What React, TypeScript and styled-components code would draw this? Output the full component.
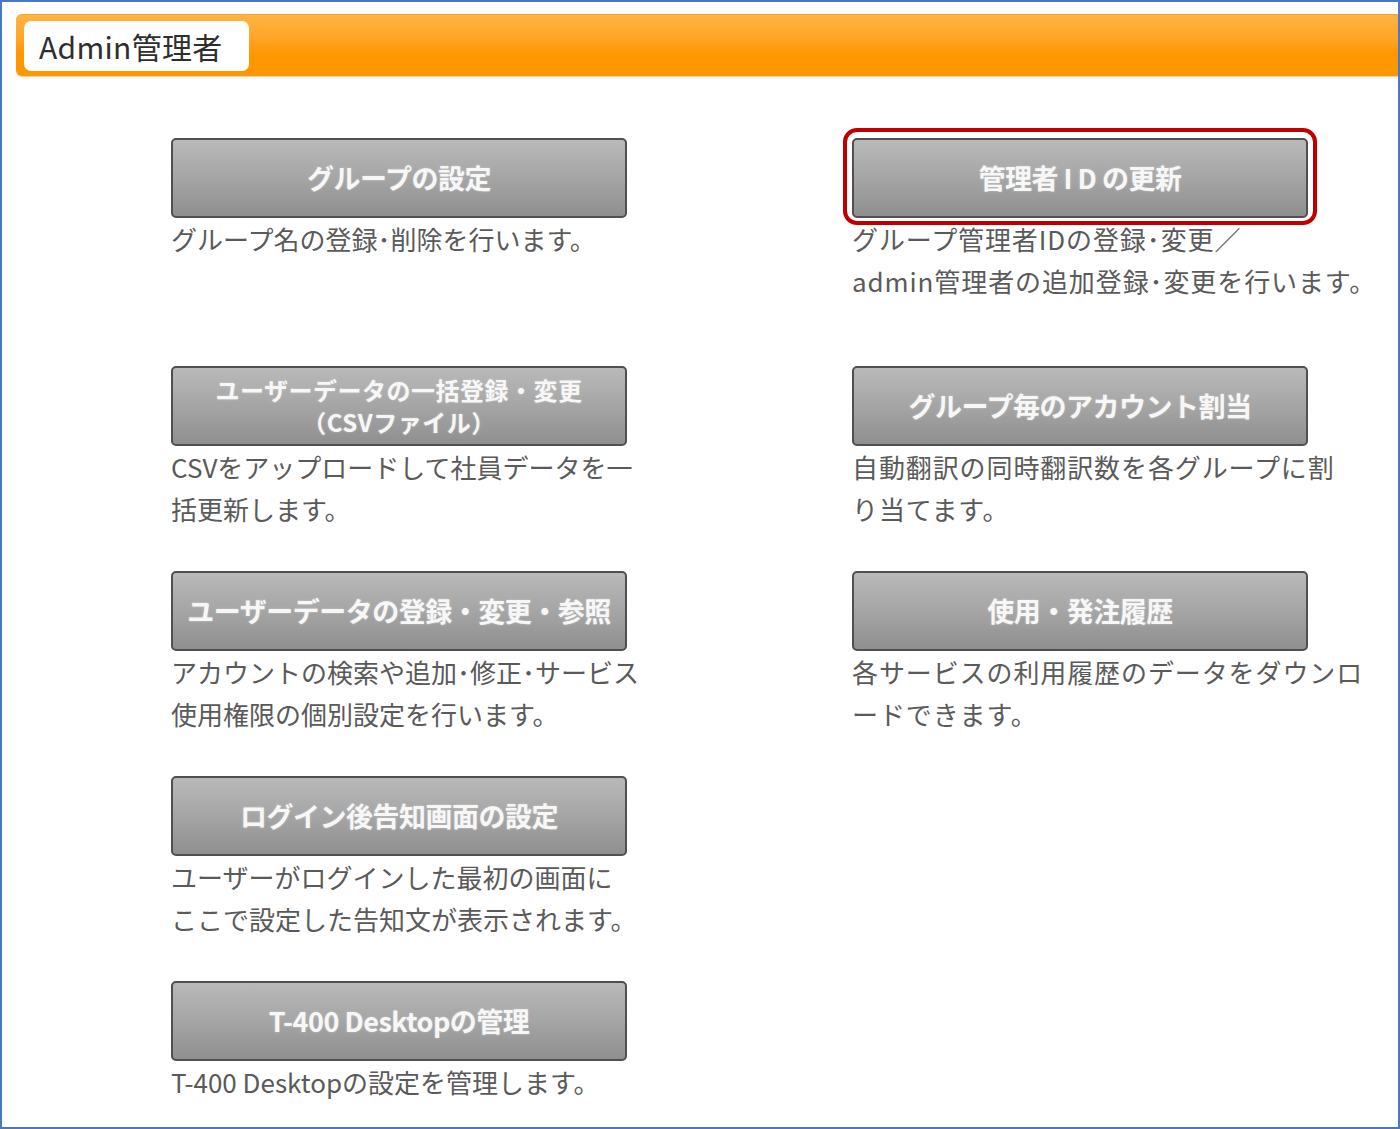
import React, { ReactElement } from 'react';
import styled, { createGlobalStyle } from 'styled-components';

const GlobalStyle = createGlobalStyle`
  html, body {
    margin: 0;
    padding: 0;
    background: #ffffff;
  }
  body {
    font-family: "Noto Sans CJK JP", "Noto Sans", sans-serif;
  }
`;

const Frame = styled.div`
  box-sizing: border-box;
  width: 1400px;
  height: 1129px;
  border: 2px solid #4a78c8;
  padding: 12px 0 0 14px;
  background: #ffffff;
  overflow: hidden;
`;

const HeaderBar = styled.div`
  display: flex;
  align-items: flex-start;
  height: 62px;
  box-sizing: border-box;
  padding: 6px 0 0 8px;
  border-radius: 6px 0 0 6px;
  border-top: 1px solid #ff9f1a;
  background: linear-gradient(to bottom, #ffb444 0%, #ffa424 40%, #ff9700 65%, #ff9700 100%);
  box-shadow: 0 1px 0 #ffd39a;
`;

const HeaderTab = styled.div`
  display: flex;
  align-items: center;
  width: 225px;
  height: 50px;
  box-sizing: border-box;
  padding-left: 15px;
  background: #ffffff;
  border-radius: 7px;
  color: #2e2e2e;
  font-size: 30px;
  letter-spacing: 0.3px;
`;

const Grid = styled.div`
  display: grid;
  grid-template-columns: 681px auto;
  row-gap: 41px;
  margin: 62px 0 0 155px;
`;

const Item = styled.div<{ $first?: boolean }>`
  display: flex;
  flex-direction: column;
  margin-bottom: ${(p) => (p.$first ? '23px' : '0')};
`;

const ButtonWrap = styled.div<{ $highlight?: boolean }>`
  position: relative;
  width: 456px;

  ${(p) =>
    p.$highlight &&
    `
    &::after {
      content: '';
      position: absolute;
      top: -10px;
      left: -9px;
      right: -9px;
      bottom: -7px;
      border: 4px solid #c00000;
      border-radius: 14px;
      pointer-events: none;
    }
  `}
`;

const MenuButton = styled.div<{ $small?: boolean }>`
  display: flex;
  align-items: center;
  justify-content: center;
  flex-direction: column;
  height: 80px;
  box-sizing: border-box;
  border: 2px solid #505050;
  border-radius: 5px;
  background: linear-gradient(to bottom, #b9b9b9 0%, #a5a5a5 50%, #8f8f8f 100%);
  color: #f7f7f7;
  font-weight: bold;
  font-size: ${(p) => (p.$small ? '24px' : '27px')};
  line-height: ${(p) => (p.$small ? '32px' : '34px')};
  text-shadow: 0 0 2px rgba(255, 255, 255, 0.7), 0 0 1px rgba(60, 60, 60, 0.6);
  white-space: nowrap;
  letter-spacing: ${(p) => (p.$small ? '0.5px' : '-0.5px')};
`;

const Description = styled.p<{ $wide?: boolean }>`
  margin: 0;
  color: #5a5a5a;
  font-size: 26px;
  line-height: 42px;
  white-space: nowrap;
  letter-spacing: ${(p) => (p.$wide ? '0.9px' : '0')};
`;

interface Entry {
  title: React.ReactNode;
  desc: React.ReactNode;
  small?: boolean;
  highlight?: boolean;
}

const rows: (Entry | null)[][] = [
  [
    { title: 'グループの設定', desc: 'グループ名の登録･削除を行います。' },
    {
      title: '管理者 I D の更新',
      desc: (
        <>
          グループ管理者IDの登録･変更／
          <br />
          admin管理者の追加登録･変更を行います。
        </>
      ),
      highlight: true,
    },
  ],
  [
    {
      title: (
        <>
          <span>ユーザーデータの一括登録・変更</span>
          <span>（CSVファイル）</span>
        </>
      ),
      desc: (
        <>
          CSVをアップロードして社員データを一
          <br />
          括更新します。
        </>
      ),
      small: true,
    },
    {
      title: 'グループ毎のアカウント割当',
      desc: (
        <>
          自動翻訳の同時翻訳数を各グループに割
          <br />
          り当てます。
        </>
      ),
    },
  ],
  [
    {
      title: 'ユーザーデータの登録・変更・参照',
      desc: (
        <>
          アカウントの検索や追加･修正･サービス
          <br />
          使用権限の個別設定を行います。
        </>
      ),
    },
    {
      title: '使用・発注履歴',
      desc: (
        <>
          各サービスの利用履歴のデータをダウンロ
          <br />
          ードできます。
        </>
      ),
    },
  ],
  [
    {
      title: 'ログイン後告知画面の設定',
      desc: (
        <>
          ユーザーがログインした最初の画面に
          <br />
          ここで設定した告知文が表示されます。
        </>
      ),
    },
    null,
  ],
  [
    {
      title: 'T-400 Desktopの管理',
      desc: 'T-400 Desktopの設定を管理します。',
    },
    null,
  ],
];

function App(): ReactElement {
  return (
    <>
      <GlobalStyle />
      <Frame>
        <HeaderBar>
          <HeaderTab>Admin管理者</HeaderTab>
        </HeaderBar>
        <Grid>
          {rows.map((row, ri) =>
            row.map((entry, ci) =>
              entry ? (
                <Item key={`${ri}-${ci}`} $first={ri === 0}>
                  <ButtonWrap $highlight={entry.highlight}>
                    <MenuButton $small={entry.small}>{entry.title}</MenuButton>
                  </ButtonWrap>
                  <Description $wide={ci === 1}>{entry.desc}</Description>
                </Item>
              ) : (
                <div key={`${ri}-${ci}`} />
              )
            )
          )}
        </Grid>
      </Frame>
    </>
  );
}

export default App;
